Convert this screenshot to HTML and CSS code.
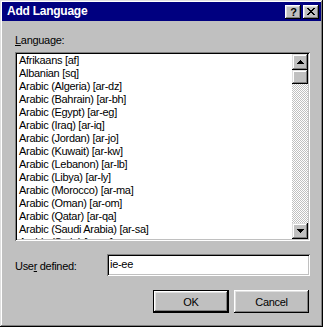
FILE: index.html
```html
<!DOCTYPE html>
<html>
<head>
<meta charset="utf-8">
<link rel="stylesheet" href="styles.css">
</head>
<body>
<div class="window">
  <div class="titlebar">
    <span class="title">Add Language</span>
    <div class="caption-btns">
      <div class="cbtn help">?</div>
      <div class="cbtn close">
        <svg width="8" height="7" viewBox="0 0 8 7"><path d="M0 0h2v1h1v1h2v-1h1v-1h2v1h-1v1h-1v1h-1v1h1v1h1v1h1v1h-2v-1h-1v-1h-2v1h-1v1h-2v-1h1v-1h1v-1h1v-1h-1v-1h-1v-1h-1z" fill="#000"/></svg>
      </div>
    </div>
  </div>
  <div class="content">
    <div class="label"><u>L</u>anguage:</div>
    <div class="listbox">
      <div class="items">
        <div class="item">Afrikaans [af]</div>
        <div class="item">Albanian [sq]</div>
        <div class="item">Arabic (Algeria) [ar-dz]</div>
        <div class="item">Arabic (Bahrain) [ar-bh]</div>
        <div class="item">Arabic (Egypt) [ar-eg]</div>
        <div class="item">Arabic (Iraq) [ar-iq]</div>
        <div class="item">Arabic (Jordan) [ar-jo]</div>
        <div class="item">Arabic (Kuwait) [ar-kw]</div>
        <div class="item">Arabic (Lebanon) [ar-lb]</div>
        <div class="item">Arabic (Libya) [ar-ly]</div>
        <div class="item">Arabic (Morocco) [ar-ma]</div>
        <div class="item">Arabic (Oman) [ar-om]</div>
        <div class="item">Arabic (Qatar) [ar-qa]</div>
        <div class="item">Arabic (Saudi Arabia) [ar-sa]</div>
        <div class="item">Arabic (Syria) [ar-sy]</div>
      </div>
      <div class="scrollbar">
        <div class="sbtn">
          <svg width="7" height="4" viewBox="0 0 7 4"><path d="M3 0h1v1h1v1h1v1h1v1h-7v-1h1v-1h1v-1h1z" fill="#000"/></svg>
        </div>
        <div class="thumb"></div>
        <div class="track"></div>
        <div class="sbtn">
          <svg width="7" height="4" viewBox="0 0 7 4"><path d="M0 0h7v1h-1v1h-1v1h-1v1h-1v-1h-1v-1h-1v-1h-1z" fill="#000"/></svg>
        </div>
      </div>
    </div>
    <div class="userrow">
      <div class="ulabel">Use<u>r</u> defined:</div>
      <div class="textbox">ie-ee</div>
    </div>
    <div class="buttons">
      <div class="btn default"><span class="btn-inner">OK</span></div>
      <div class="btn"><span class="btn-inner">Cancel</span></div>
    </div>
  </div>
</div>
</body>
</html>
```

FILE: styles.css
```css
html, body {
  margin: 0;
  padding: 0;
  background: #c0c0c0;
}

.window {
  width: 323px;
  height: 327px;
  box-sizing: border-box;
  padding: 2px 2px 2px 2px;
  background: #c0c0c0;
  box-shadow: inset -1px -1px #000, inset 1px 1px #dfdfdf, inset -2px -2px #808080, inset 2px 2px #fff;
  font-family: "Liberation Sans", Arial, sans-serif;
  font-size: 11px;
  letter-spacing: -0.3px;
  color: #000;
}

.titlebar {
  height: 19px;
  background: #000080;
  display: flex;
  align-items: center;
  justify-content: space-between;
  padding: 0 2px 0 5px;
}

.title {
  color: #fff;
  font-weight: bold;
  font-size: 12px;
  letter-spacing: -0.25px;
  line-height: 19px;
}

.caption-btns {
  display: flex;
  gap: 2px;
}

.cbtn {
  width: 16px;
  height: 14px;
  box-sizing: border-box;
  background: #c0c0c0;
  box-shadow: inset -1px -1px #000, inset 1px 1px #fff, inset -2px -2px #808080, inset 2px 2px #dfdfdf;
  display: flex;
  align-items: center;
  justify-content: center;
}

.help {
  font-weight: bold;
  font-size: 11px;
  line-height: 14px;
  letter-spacing: 0;
  padding-left: 1px;
}

.content {
  padding: 13px 11px 0 13px;
}

.label {
  height: 13px;
  line-height: 13px;
}

.listbox {
  margin-top: 5px;
  height: 189px;
  box-sizing: border-box;
  padding: 2px;
  background: #fff;
  box-shadow: inset 1px 1px #808080, inset -1px -1px #fff, inset 2px 2px #000, inset -2px -2px #c0c0c0;
  display: flex;
  overflow: hidden;
}

.items {
  flex: 1;
  overflow: hidden;
  padding-left: 2px;
}

.item {
  height: 13px;
  line-height: 13px;
  white-space: nowrap;
}

.scrollbar {
  width: 16px;
  display: flex;
  flex-direction: column;
}

.sbtn, .thumb {
  width: 16px;
  box-sizing: border-box;
  background: #c0c0c0;
  box-shadow: inset -1px -1px #000, inset 1px 1px #dfdfdf, inset -2px -2px #808080, inset 2px 2px #fff;
}

.sbtn {
  height: 16px;
  display: flex;
  align-items: center;
  justify-content: center;
}

.thumb {
  height: 14px;
}

.track {
  flex: 1;
  background: repeating-conic-gradient(#fff 0 25%, #c0c0c0 0 50%) 0 0 / 2px 2px;
}

.userrow {
  margin-top: 13px;
  display: flex;
  align-items: center;
}

.ulabel {
  width: 92px;
  padding-top: 2px;
}

.textbox {
  flex: 1;
  height: 22px;
  box-sizing: border-box;
  background: #fff;
  padding: 3px 4px 0 3px;
  line-height: 15px;
  box-shadow: inset 1px 1px #808080, inset -1px -1px #fff, inset 2px 2px #000, inset -2px -2px #c0c0c0;
}

.buttons {
  margin-top: 14px;
  display: flex;
  justify-content: flex-end;
  gap: 5px;
  padding-right: 1px;
}

.btn {
  width: 75px;
  height: 23px;
  box-sizing: border-box;
  background: #c0c0c0;
  box-shadow: inset -1px -1px #000, inset 1px 1px #fff, inset -2px -2px #808080, inset 2px 2px #dfdfdf;
  display: flex;
  align-items: center;
  justify-content: center;
}

.btn.default {
  width: 76px;
  box-shadow: inset 0 0 0 1px #000, inset -2px -2px #000, inset 2px 2px #fff, inset -3px -3px #808080, inset 3px 3px #dfdfdf;
}

.btn-inner {
  line-height: 13px;
  padding-top: 1px;
}
```
